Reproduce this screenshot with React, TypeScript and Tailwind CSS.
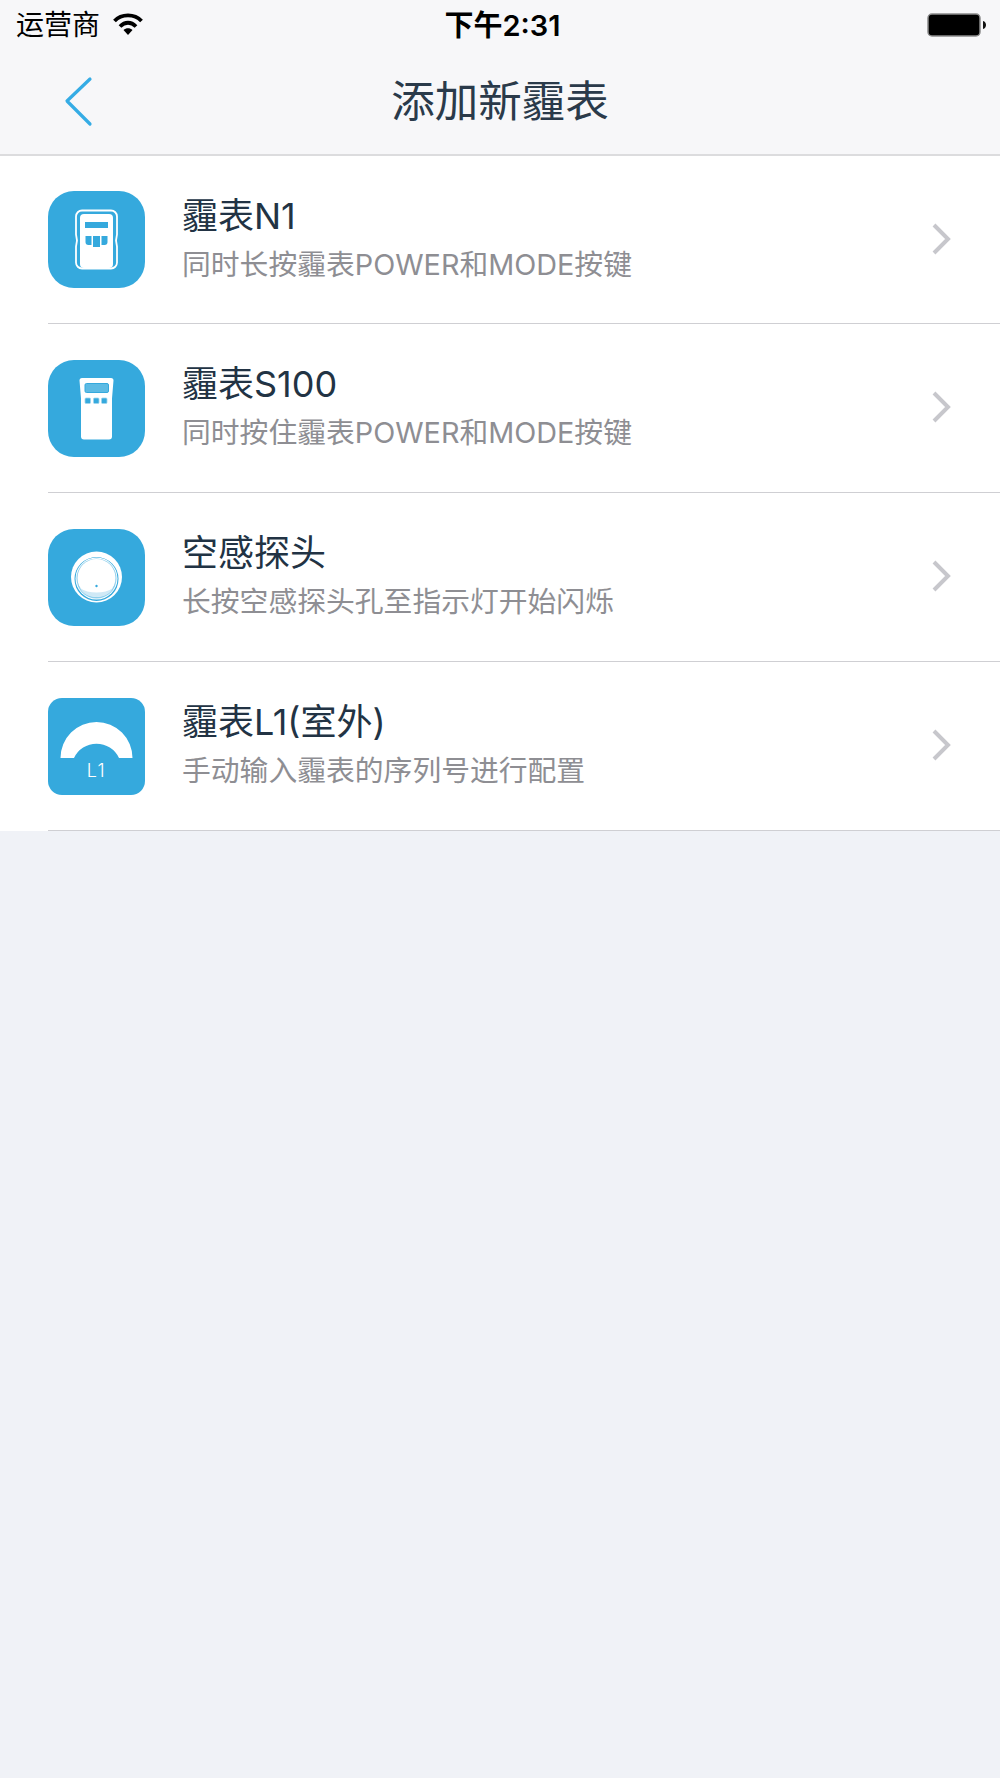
const cjk = "font-['Inter','Noto_Sans_CJK_SC',sans-serif]";

const rows = [
  { title: "霾表N1", desc: "同时长按霾表POWER和MODE按键", icon: <MeterN1 />, radius: "rounded-[26px]" },
  { title: "霾表S100", desc: "同时按住霾表POWER和MODE按键", icon: <MeterS100 />, radius: "rounded-[26px]" },
  { title: "空感探头", desc: "长按空感探头孔至指示灯开始闪烁", icon: <Probe />, radius: "rounded-[26px]" },
  { title: "霾表L1(室外)", desc: "手动输入霾表的序列号进行配置", icon: <MeterL1 />, radius: "rounded-[14px]" },
];

export default function App() {
  return (
    <div className={`flex h-[1778px] w-[1000px] flex-col bg-[#f0f2f7] ${cjk}`}>
      {/* Status bar + nav */}
      <div className="h-[156px] border-b-2 border-[#dcdcde] bg-[#f7f7f9]">
        <div className="flex h-[50px] items-center justify-between pl-4 pr-[13px] text-[28px] leading-none text-black">
          <div className="flex w-[300px] items-center gap-[13px]">
            <span>运营商</span>
            <WifiIcon />
          </div>
          <span className="ml-[2px] text-[29px] font-semibold">下午2:31</span>
          <div className="flex w-[300px] justify-end">
            <BatteryIcon />
          </div>
        </div>
        <div className="relative flex h-[104px] items-center justify-center">
          <svg className="absolute left-[62px] top-[25px]" width="34" height="52" viewBox="0 0 34 52" fill="none">
            <path d="M28 4 L5 26 L28 49" stroke="#35ace5" strokeWidth="3.2" strokeLinecap="round" strokeLinejoin="round" />
          </svg>
          <h1 className="text-[43.500px] leading-none text-[#2a3a4a]">添加新霾表</h1>
        </div>
      </div>

      {/* Device list */}
      <div className="bg-white">
        {rows.map((row) => (
          <div key={row.title} className="ml-12 flex h-[169px] items-center border-b border-[#cfcfd3] pr-[47px] first:h-[168px]">
            <div className={`h-[97px] w-[97px] shrink-0 overflow-hidden bg-[#35a9dd] ${row.radius}`}>{row.icon}</div>
            <div className="ml-[37px] flex-1 pb-[3px]">
              <p className="text-[36px] leading-[44px] text-[#223344]">{row.title}</p>
              <p className="mt-[9px] text-[28.800px] leading-[36px] text-[#8e8e93]">{row.desc}</p>
            </div>
            <svg className="mb-[2px]" width="22" height="34" viewBox="0 0 22 34" fill="none">
              <path d="M3 3 L17 17 L3 31" stroke="#c7c7cc" strokeWidth="4" />
            </svg>
          </div>
        ))}
      </div>
    </div>
  );
}

function WifiIcon() {
  return (
    <svg width="30" height="24" viewBox="0 0 30 24" fill="none">
      <path d="M1.500 8 C8.500 0.500 21.500 0.500 28.500 8" stroke="#000" strokeWidth="3.800" />
      <path d="M7 13.500 C12 8.500 18 8.500 23 13.500" stroke="#000" strokeWidth="3.800" />
      <path d="M10.500 17 L15 22 L19.500 17 C17 14.500 13 14.500 10.500 17 Z" fill="#000" />
    </svg>
  );
}

function BatteryIcon() {
  return (
    <svg width="60" height="24" viewBox="0 0 60 24" fill="none">
      <rect x="1" y="1" width="52" height="22" rx="4" fill="#000" stroke="#8a8a8a" strokeWidth="1.500" />
      <path d="M56 8 C60 9 60 15 56 16 Z" fill="#111" />
    </svg>
  );
}

function MeterN1() {
  return (
    <svg width="97" height="97" viewBox="0 0 97 97" fill="none">
      <path d="M34 19.500 h29 a6 6 0 0 1 6 6 v18 l-1 6 l1 6 v16 a6 6 0 0 1 -6 6 h-29 a6 6 0 0 1 -6 -6 v-16 l1 -6 l-1 -6 v-18 a6 6 0 0 1 6 -6 z" stroke="#fff" strokeWidth="1.800" />
      <path d="M36 23 h25 a4 4 0 0 1 4 4 v46 a4 4 0 0 1 -4 4 h-25 a4 4 0 0 1 -4 -4 v-46 a4 4 0 0 1 4 -4 z" fill="#fff" />
      <rect x="37" y="31" width="23" height="6" fill="#35a9dd" />
      <path d="M37.500 45 h6 v9 h-3 a3 3 0 0 1 -3 -3 z" fill="#35a9dd" />
      <rect x="45" y="45" width="7" height="11" fill="#35a9dd" />
      <path d="M53.500 45 h6 v6 a3 3 0 0 1 -3 3 h-3 z" fill="#35a9dd" />
    </svg>
  );
}

function MeterS100() {
  return (
    <svg width="97" height="97" viewBox="0 0 97 97" fill="none">
      <path d="M34 18 h29 a2.500 2.500 0 0 1 2.500 2.500 l-1.500 18 v38 a3 3 0 0 1 -3 3 h-25 a3 3 0 0 1 -3 -3 v-38 l-1.500 -18 a2.500 2.500 0 0 1 2.500 -2.500 z" fill="#fff" />
      <rect x="37" y="23.500" width="23.500" height="9" rx="1.500" fill="#5dbbe4" stroke="#35a9dd" strokeWidth="1" />
      <rect x="37" y="38" width="5.500" height="5.500" rx="1" fill="#35a9dd" stroke="#9fd5ee" strokeWidth="0.800" />
      <rect x="45.500" y="38" width="5.500" height="5.500" rx="1" fill="#35a9dd" stroke="#9fd5ee" strokeWidth="0.800" />
      <rect x="53.500" y="38" width="5.500" height="5.500" rx="1" fill="#35a9dd" stroke="#9fd5ee" strokeWidth="0.800" />
    </svg>
  );
}

function Probe() {
  return (
    <svg width="97" height="97" viewBox="0 0 97 97" fill="none">
      <circle cx="48.500" cy="48" r="25.500" fill="#fff" />
      <circle cx="48.500" cy="50" r="22" fill="#35a9dd" />
      <circle cx="48.500" cy="49.500" r="21" fill="#fff" />
      <circle cx="48.500" cy="49.500" r="20" fill="#8fcfec" />
      <circle cx="48.500" cy="49" r="19" fill="#fff" />
      <path d="M32 59 C40 65 57 65 65 59 C60 71 37 71 32 59 Z" fill="#cfe9f6" />
      <circle cx="48.500" cy="57" r="1.200" fill="#35a9dd" />
    </svg>
  );
}

function MeterL1() {
  return (
    <svg width="97" height="97" viewBox="0 0 97 97" fill="none">
      <path d="M12.500 60 A36 36 0 0 1 84.500 60 H71 A24.800 24.800 0 0 0 26 60 Z" fill="#fff" />
      <text x="48.500" y="79" textAnchor="middle" fill="#fff" fontSize="18" fontWeight="300" letterSpacing="1.500" fontFamily="Inter, sans-serif">L1</text>
    </svg>
  );
}
